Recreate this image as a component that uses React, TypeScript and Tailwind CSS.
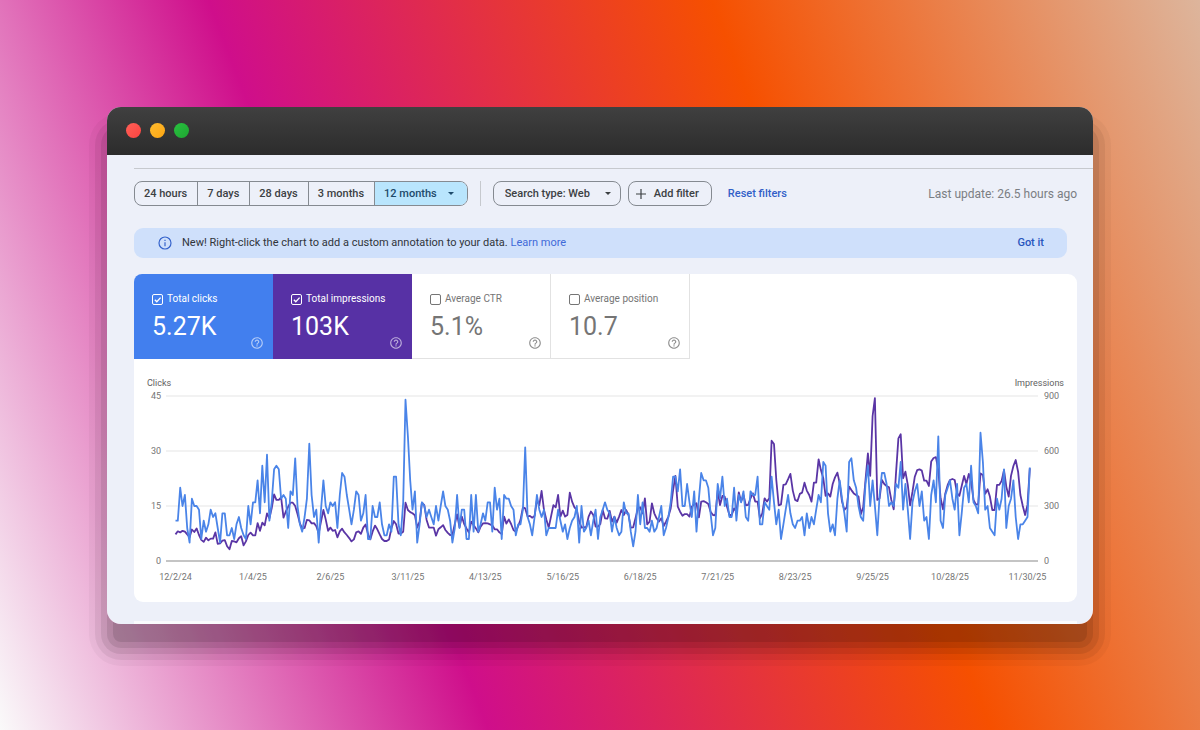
import { useState } from 'react';

const clicks = [
  11, 11, 20, 15, 18, 9, 5, 17, 15, 15, 14, 6, 11, 8, 10, 14, 12, 13, 9, 5,
  13, 13, 7, 7, 9, 6, 10, 12, 9, 7, 6, 15, 10, 16, 16, 22, 13, 26, 16, 29,
  11, 16, 25, 26, 25, 17, 18, 17, 9, 19, 18, 28, 15, 10, 8, 12, 17, 32, 18, 12,
  14, 5, 14, 22, 15, 13, 16, 15, 16, 9, 18, 24, 23, 18, 14, 10, 14, 19, 18, 11,
  13, 18, 6, 6, 15, 12, 12, 16, 10, 7, 7, 10, 8, 23, 23, 10, 7, 16, 44, 34,
  22, 14, 19, 5, 10, 16, 15, 12, 14, 12, 10, 15, 11, 15, 19, 15, 14, 11, 5, 9,
  18, 9, 14, 14, 6, 6, 18, 8, 18, 8, 10, 13, 11, 16, 16, 8, 20, 14, 17, 6,
  18, 17, 17, 15, 14, 7, 10, 10, 14, 31, 12, 10, 7, 12, 18, 14, 12, 14, 7, 9,
  9, 9, 9, 14, 11, 8, 10, 6, 9, 11, 12, 15, 5, 15, 8, 9, 11, 7, 11, 14,
  6, 12, 14, 16, 14, 13, 8, 12, 9, 7, 8, 16, 13, 13, 8, 4, 8, 18, 10, 16,
  9, 9, 8, 11, 8, 9, 12, 15, 7, 9, 12, 16, 23, 23, 19, 25, 15, 15, 21, 16,
  12, 19, 8, 17, 24, 22, 22, 20, 13, 7, 9, 21, 17, 23, 15, 17, 12, 12, 20, 11,
  18, 16, 19, 12, 11, 19, 18, 18, 23, 10, 10, 16, 15, 14, 23, 16, 10, 14, 6, 10,
  14, 18, 13, 10, 9, 11, 11, 12, 7, 13, 9, 12, 10, 14, 18, 16, 27, 26, 13, 8,
  10, 7, 17, 22, 17, 13, 8, 27, 28, 22, 20, 15, 12, 11, 21, 26, 15, 22, 15, 7,
  18, 24, 24, 21, 15, 16, 15, 21, 20, 27, 14, 21, 14, 6, 16, 19, 21, 15, 19, 11,
  12, 6, 18, 22, 16, 34, 11, 9, 18, 20, 22, 17, 14, 21, 7, 13, 20, 21, 16, 26,
  16, 15, 13, 35, 27, 14, 15, 9, 8, 7, 17, 14, 17, 25, 9, 15, 17, 22, 12, 6,
  10, 10, 11, 12, 25.5,
];

const impressions = [
  145, 162, 156, 165, 160, 145, 130, 172, 158, 178, 142, 115, 104, 127, 113, 122, 122, 156, 93, 96,
  111, 114, 80, 64, 109, 107, 102, 124, 135, 85, 107, 142, 155, 140, 140, 207, 165, 209, 195, 260,
  233, 287, 364, 333, 333, 347, 236, 270, 296, 318, 318, 300, 256, 205, 176, 180, 225, 222, 205, 207,
  190, 151, 215, 278, 227, 165, 182, 165, 169, 129, 162, 176, 156, 142, 125, 107, 118, 156, 162, 148,
  182, 199, 147, 118, 160, 193, 173, 145, 120, 109, 109, 118, 178, 218, 200, 150, 150, 160, 318, 278,
  267, 260, 249, 182, 215, 318, 305, 224, 182, 182, 182, 138, 173, 184, 196, 169, 153, 142, 142, 202,
  255, 184, 242, 202, 178, 155, 215, 196, 178, 156, 187, 205, 207, 205, 200, 195, 173, 173, 156, 147,
  242, 204, 227, 202, 169, 160, 191, 224, 293, 287, 242, 246, 236, 246, 333, 305, 382, 278, 227, 182,
  242, 305, 293, 360, 242, 275, 242, 251, 373, 324, 293, 278, 215, 182, 185, 184, 242, 270, 251, 187,
  187, 202, 278, 233, 231, 273, 215, 242, 209, 242, 278, 251, 278, 251, 182, 184, 233, 287, 293, 260,
  342, 200, 215, 315, 260, 233, 215, 233, 191, 215, 242, 287, 387, 464, 296, 269, 247, 256, 256, 242,
  296, 309, 315, 238, 324, 327, 320, 311, 269, 251, 249, 384, 305, 355, 351, 296, 251, 251, 287, 270,
  375, 324, 360, 304, 306, 342, 369, 324, 324, 233, 260, 342, 324, 342, 656, 638, 442, 304, 309, 415,
  418, 446, 475, 384, 333, 327, 366, 373, 427, 384, 360, 324, 427, 427, 555, 496, 451, 355, 369, 351,
  420, 456, 482, 424, 324, 278, 293, 406, 387, 369, 360, 351, 256, 293, 442, 587, 464, 791, 888, 333,
  342, 442, 420, 409, 402, 333, 282, 478, 669, 691, 451, 487, 415, 304, 378, 460, 496, 500, 493, 438,
  438, 409, 542, 562, 566, 496, 342, 282, 369, 415, 442, 447, 442, 369, 355, 409, 464, 420, 475, 433,
  333, 309, 309, 478, 469, 366, 391, 351, 278, 278, 415, 415, 437, 496, 406, 351, 464, 518, 551, 487,
  360, 300, 251, 306, 506,
];

const dates = [
  '12/2/24', '1/4/25', '2/6/25', '3/11/25', '4/13/25', '5/16/25',
  '6/18/25', '7/21/25', '8/23/25', '9/25/25', '10/28/25', '11/30/25',
];

const BASE_Y = 202;
const PLOT_H = 165;
const START_X = 41.5;
const STEP = 2.347;

const toPoints = (data: number[], max: number) =>
  data
    .map((v, i) => `${(START_X + i * STEP).toFixed(1)},${(BASE_Y - (v / max) * PLOT_H).toFixed(1)}`)
    .join(' ');

function Chart() {
  return (
    <svg viewBox="0 0 943 243" className="block w-full h-auto" role="img" aria-label="Performance chart">
      {[37, 92, 147].map((y) => (
        <line key={y} x1="32" x2="904" y1={y} y2={y} stroke="#eeeeee" strokeWidth="1.5" />
      ))}
      <line x1="32" x2="904" y1={BASE_Y} y2={BASE_Y} stroke="#b0b0b0" strokeWidth="1.5" />
      <polyline
        points={toPoints(impressions, 900)}
        fill="none"
        stroke="#5a35a5"
        strokeWidth="1.8"
        strokeLinejoin="round"
      />
      <polyline
        points={toPoints(clicks, 45)}
        fill="none"
        stroke="#4a84e8"
        strokeWidth="1.8"
        strokeLinejoin="round"
      />
      <g className="text-[9px]" fill="#757575">
        <text x="13" y="27" fill="#616161">Clicks</text>
        <text x="930" y="27" fill="#616161" textAnchor="end">Impressions</text>
        {[45, 30, 15, 0].map((n, i) => (
          <text key={n} x="27" y={40 + i * 55} textAnchor="end">{n}</text>
        ))}
        {[900, 600, 300, 0].map((n, i) => (
          <text key={n} x="910" y={40 + i * 55}>{n}</text>
        ))}
        {dates.map((d, i) => (
          <text key={d} x={START_X + i * 33 * STEP} y="221" textAnchor="middle">{d}</text>
        ))}
      </g>
    </svg>
  );
}

function Caret() {
  return (
    <svg viewBox="0 0 6 3" className="w-[6px] h-[3px]" fill="currentColor" aria-hidden="true">
      <path d="M0 0h6L3 3z" />
    </svg>
  );
}

const metrics = [
  { id: 'clicks', label: 'Total clicks', value: '5.27K', tile: 'bg-[#427fee] text-white rounded-tl-lg', icon: 'text-white/60' },
  { id: 'impressions', label: 'Total impressions', value: '103K', tile: 'bg-[#5731a5] text-white', icon: 'text-white/60' },
  { id: 'ctr', label: 'Average CTR', value: '5.1%', tile: 'text-[#757575] shadow-[inset_-1px_-1px_0_#e2e2e2]', icon: 'text-[#909090]' },
  { id: 'position', label: 'Average position', value: '10.7', tile: 'text-[#757575] shadow-[inset_-1px_-1px_0_#e2e2e2]', icon: 'text-[#909090]' },
];

const ranges = ['24 hours', '7 days', '28 days', '3 months', '12 months'];

export default function App() {
  const [range, setRange] = useState('12 months');
  const [active, setActive] = useState(['clicks', 'impressions']);

  const toggle = (id: string) =>
    setActive(active.includes(id) ? active.filter((a) => a !== id) : [...active, id]);

  return (
    <div className="min-h-screen p-[107px] pb-[106px] font-[Roboto,sans-serif] text-[11px] leading-4 text-[#3c4043] bg-[linear-gradient(69deg,#fafafa_0%,#cf0e8b_33%,#f65000_67%,#ddb59c_100%)]">
      <div className="rounded-[14px] shadow-[0_24px_0_-6px_rgba(0,0,0,0.1),0_24px_0_0_rgba(0,0,0,0.09),0_24px_0_6px_rgba(0,0,0,0.08),0_24px_0_12px_rgba(0,0,0,0.06),0_24px_0_18px_rgba(0,0,0,0.03)]">
        <div className="rounded-[14px] overflow-hidden bg-[#edf0f9]">
          {/* title bar */}
          <div className="h-12 px-[19px] pb-px flex items-center gap-[9px] bg-linear-to-b from-[#404040] to-[#2c2c2c]">
            <span className="size-[15px] rounded-full bg-linear-to-br from-[#ff5f57] to-[#fb4340]" />
            <span className="size-[15px] rounded-full bg-linear-to-br from-[#febc2e] to-[#fda50e]" />
            <span className="size-[15px] rounded-full bg-linear-to-br from-[#28c23f] to-[#1fa532]" />
          </div>

          <div className="ml-[27px] mt-[13px] border-t border-[#c6c9ce]" />

          <div className="pl-[27px] pr-4 pt-3">
            {/* filters */}
            <div className="flex items-center h-[25px] font-medium">
              <div className="flex h-full border border-[#858a91] rounded-lg overflow-hidden">
                {ranges.map((r) => (
                  <button
                    key={r}
                    type="button"
                    aria-pressed={range === r}
                    onClick={() => setRange(r)}
                    className={`flex items-center pl-[9px] pr-[10px] border-[#858a91] not-first:border-l ${range === r ? 'bg-[#b9e5fd] text-[#1d4a6b]' : ''}`}
                  >
                    {r}
                    {r === '12 months' && <span className="ml-[11px] mr-[3px]"><Caret /></span>}
                  </button>
                ))}
              </div>
              <div className="mx-3 h-full border-l border-[#c6c9ce]" />
              <div className="relative h-full">
                <select
                  aria-label="Search type"
                  className="w-32 h-full pl-[11px] pr-5 appearance-none border border-[#858a91] rounded-lg"
                >
                  <option>Search type: Web</option>
                  <option>Search type: Image</option>
                  <option>Search type: Video</option>
                </select>
                <span className="absolute right-[10px] top-[11px] pointer-events-none"><Caret /></span>
              </div>
              <button type="button" className="ml-[7px] h-full pl-[7px] pr-3 flex items-center gap-2 border border-[#858a91] rounded-lg">
                <svg viewBox="0 0 10 10" className="size-[10px]" stroke="currentColor" strokeWidth="1.2" aria-hidden="true">
                  <path d="M5 0v10M0 5h10" />
                </svg>
                Add filter
              </button>
              <button type="button" className="ml-4 text-[#3260c8]">Reset filters</button>
              <span className="ml-auto text-xs font-normal text-[#7b7e83]">Last update: 26.5 hours ago</span>
            </div>

            {/* annotation notice */}
            <div className="mt-[22px] mr-[10px] h-[30px] pl-6 pr-[23px] flex items-center bg-[#cfe0fb] rounded-[9px] text-[#30343a]">
              <svg viewBox="0 0 14 14" className="size-[14px] mr-[10px]" fill="none" stroke="#3563cb" strokeWidth="1.2" aria-hidden="true">
                <circle cx="7" cy="7" r="6" />
                <path d="M7 6.2v4M7 3.8v1.3" />
              </svg>
              <p>
                New! Right-click the chart to add a custom annotation to your data.{' '}
                <a href="#" className="text-[#3f6ad8]">Learn more</a>
              </p>
              <button type="button" className="ml-auto font-medium text-[#2855bd]">Got it</button>
            </div>

            {/* performance card */}
            <div className="mt-4 bg-white rounded-[9px]">
              <div className="flex">
                {metrics.map((m) => (
                  <div key={m.id} className={`relative w-[139px] h-[85px] pl-[18px] pt-[17px] ${m.tile}`}>
                    <label className="flex items-center gap-1 text-[10px]">
                      <span className="relative size-[11px]">
                        <input
                          type="checkbox"
                          checked={active.includes(m.id)}
                          onChange={() => toggle(m.id)}
                          className="peer block size-[11px] appearance-none border border-current rounded-[2px]"
                        />
                        <svg
                          viewBox="0 0 11 11"
                          className="absolute inset-0 hidden peer-checked:block pointer-events-none"
                          fill="none"
                          stroke="currentColor"
                          strokeWidth="1.3"
                        >
                          <path d="M2.8 5.8l2 2 3.8-4.2" />
                        </svg>
                      </span>
                      {m.label}
                    </label>
                    <p className="mt-1 text-[25px] leading-8">{m.value}</p>
                    <svg
                      viewBox="0 0 24 24"
                      className={`absolute right-[9px] bottom-[9px] size-[14px] ${m.icon}`}
                      fill="currentColor"
                      aria-hidden="true"
                    >
                      <path d="M11 18h2v-2h-2v2zm1-16C6.48 2 2 6.48 2 12s4.48 10 10 10 10-4.48 10-10S17.52 2 12 2zm0 18c-4.41 0-8-3.59-8-8s3.59-8 8-8 8 3.59 8 8-3.59 8-8 8zm0-14c-2.21 0-4 1.79-4 4h2c0-1.1.9-2 2-2s2 .9 2 2c0 2-3 1.75-3 5h2c0-2.25 3-2.5 3-5 0-2.21-1.79-4-4-4z" />
                    </svg>
                  </div>
                ))}
              </div>
              <Chart />
            </div>
          </div>

          {/* top edge of the next card */}
          <div className="ml-[27px] mr-4 mt-[19px] h-[3px] bg-white/70" />
        </div>
      </div>
    </div>
  );
}
